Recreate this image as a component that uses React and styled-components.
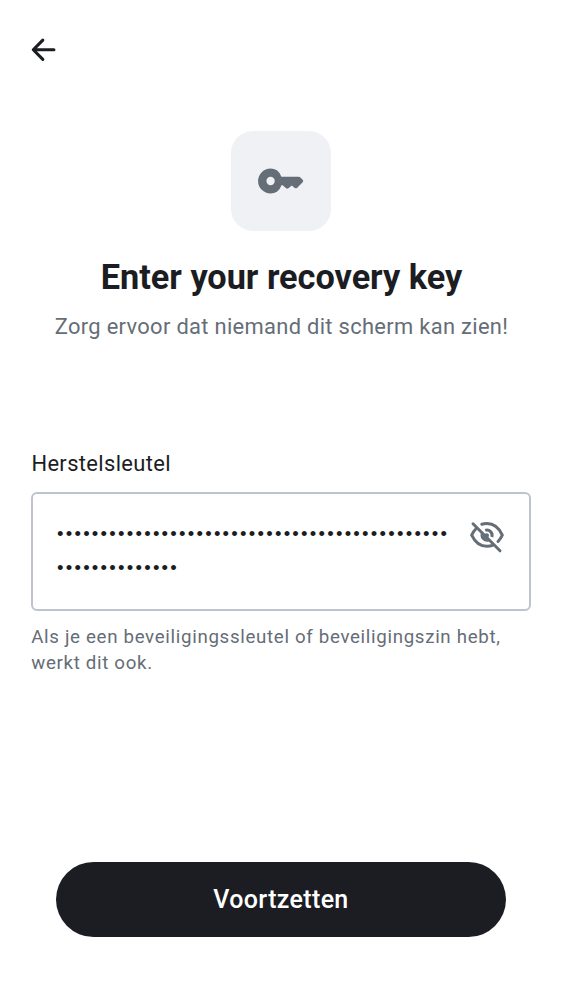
import React from 'react';
import styled, { createGlobalStyle } from 'styled-components';

const ink = '#1b1d22';
const muted = '#656d77';

const GlobalStyle = createGlobalStyle`
  * { box-sizing: border-box; }
  body { margin: 0; background: #fff; font-family: Roboto, sans-serif; }
`;

const Screen = styled.main`
  height: 1000px;
  display: flex;
  flex-direction: column;
  background: #fff;
  color: ${ink};
`;

const TopBar = styled.header`
  height: 100px;
  padding-left: 25px;
  display: flex;
  align-items: center;
`;

const IconButton = styled.button`
  display: flex;
  flex: none;
  padding: 0;
  border: 0;
  background: none;
  color: ${(p) => (p.$muted ? muted : ink)};
`;

const Hero = styled.section`
  height: 320px;
  padding-top: 31px;
  display: flex;
  flex-direction: column;
  align-items: center;
`;

const KeyTile = styled.div`
  width: 100px;
  height: 100px;
  border-radius: 22px;
  background: #f0f1f5;
  color: ${muted};
  display: flex;
  align-items: center;
  justify-content: center;
`;

const Title = styled.h1`
  margin: 24px 0 0;
  padding-left: 1px;
  font-size: 34.3px;
  line-height: 44px;
  letter-spacing: -0.03px;
  font-weight: 700;
  white-space: nowrap;
`;

const Subtitle = styled.p`
  margin: 12px 0 0;
  padding-left: 1px;
  font-size: 21.9px;
  line-height: 31px;
  letter-spacing: 0.32px;
  color: ${muted};
  white-space: nowrap;
`;

const Field = styled.section`
  padding: 28px 31px 0;
  flex: 1;
`;

const Label = styled.div`
  padding-left: 0.4px;
  font-size: 21.9px;
  line-height: 31px;
  letter-spacing: 0.37px;
`;

const InputBox = styled.div`
  height: 119px;
  margin-top: 13px;
  padding: 23px 23px 0 24px;
  border: 2px solid #bdc4cf;
  border-radius: 6px;
  display: flex;
  justify-content: space-between;
`;

const Secret = styled.div`
  font-family: "Liberation Sans", sans-serif;
  font-size: 18.5px;
  line-height: 34.4px;
  letter-spacing: 2.24px;
`;

const SecretLine = styled.div`
  white-space: nowrap;
`;

const Helper = styled.p`
  margin: 13px 0 0;
  padding-left: 0.2px;
  font-size: 18.7px;
  line-height: 26px;
  letter-spacing: 0.68px;
  color: ${muted};
`;

const Footer = styled.footer`
  padding: 0 56px 63px;
`;

const PrimaryButton = styled.button`
  display: block;
  width: 100%;
  height: 75px;
  padding: 0;
  border: 0;
  border-radius: 38px;
  background: ${ink};
  color: #fff;
  font: 500 25px/75px Roboto, sans-serif;
  letter-spacing: 0.35px;
`;

const BackIcon = () => (
  <svg width="37.5" height="37.5" viewBox="0 0 24 24" fill="none" stroke="currentColor" strokeWidth="2" strokeLinecap="round" strokeLinejoin="round">
    <path d="M18.5 12H5.4M11.4 5.9 5.3 12l6.1 6.1" />
  </svg>
);

const KeyIcon = () => (
  <svg width="50" height="50" viewBox="0 0 24 24" fill="currentColor" fillRule="evenodd">
    <path d="M9 12A2 2 0 1 0 5 12A2 2 0 1 0 9 12ZM7 18q-2.5 0-4.25-1.75T1 12t1.75-4.25T7 6q1.675 0 3.037.825A6.2 6.2 0 0 1 12.2 10h8.375a1.03 1.03 0 0 1 .725.3l1.1 1.1a.85.85 0 0 1 0 1.2l-2.6 2.6a1 1 0 0 1-1.35.05L17.2 14.2l-1.65 1.25a.9.9 0 0 1-1.1 0L12.8 14h-.6a6.2 6.2 0 0 1-2.162 3.175Q8.675 18 7 18" />
  </svg>
);

const HiddenIcon = () => (
  <svg width="38" height="38" viewBox="0 0 38 38" fill="none" stroke="currentColor" strokeWidth="3" strokeLinecap="round">
    <path d="M13.8 7.3Q16 6.6 19 6.6C26 6.6 31.2 11.4 34.3 18.1Q32.6 21.8 30 24.5" />
    <path d="M8.3 11.5Q5.3 14.2 3.7 18.1C6.8 24.8 12 29.3 19 29.3Q22 29.3 24.5 28.4" />
    <path d="M17.2 13.4a5.2 5.2 0 0 1 6.6 6.6" strokeLinecap="butt" />
    <path d="M12.8 16.2a6.7 6.7 0 0 0 8.3 8.3z" fill="currentColor" stroke="none" />
    <circle cx="18.7" cy="18.6" r="2.3" fill="currentColor" stroke="none" />
    <path d="m5 6.8 27 27" />
  </svg>
);

export default function App() {
  return (
    <>
      <GlobalStyle />
      <Screen>
        <TopBar>
          <IconButton aria-label="Terug"><BackIcon /></IconButton>
        </TopBar>
        <Hero>
          <KeyTile><KeyIcon /></KeyTile>
          <Title>Enter your recovery key</Title>
          <Subtitle>Zorg ervoor dat niemand dit scherm kan zien!</Subtitle>
        </Hero>
        <Field>
          <Label>Herstelsleutel</Label>
          <InputBox>
            <Secret>
              <SecretLine>{'•'.repeat(45)}</SecretLine>
              <SecretLine>{'•'.repeat(14)}</SecretLine>
            </Secret>
            <IconButton $muted aria-label="Tonen"><HiddenIcon /></IconButton>
          </InputBox>
          <Helper>
            Als je een beveiligingssleutel of beveiligingszin hebt,
            <br />
            werkt dit ook.
          </Helper>
        </Field>
        <Footer>
          <PrimaryButton>Voortzetten</PrimaryButton>
        </Footer>
      </Screen>
    </>
  );
}
